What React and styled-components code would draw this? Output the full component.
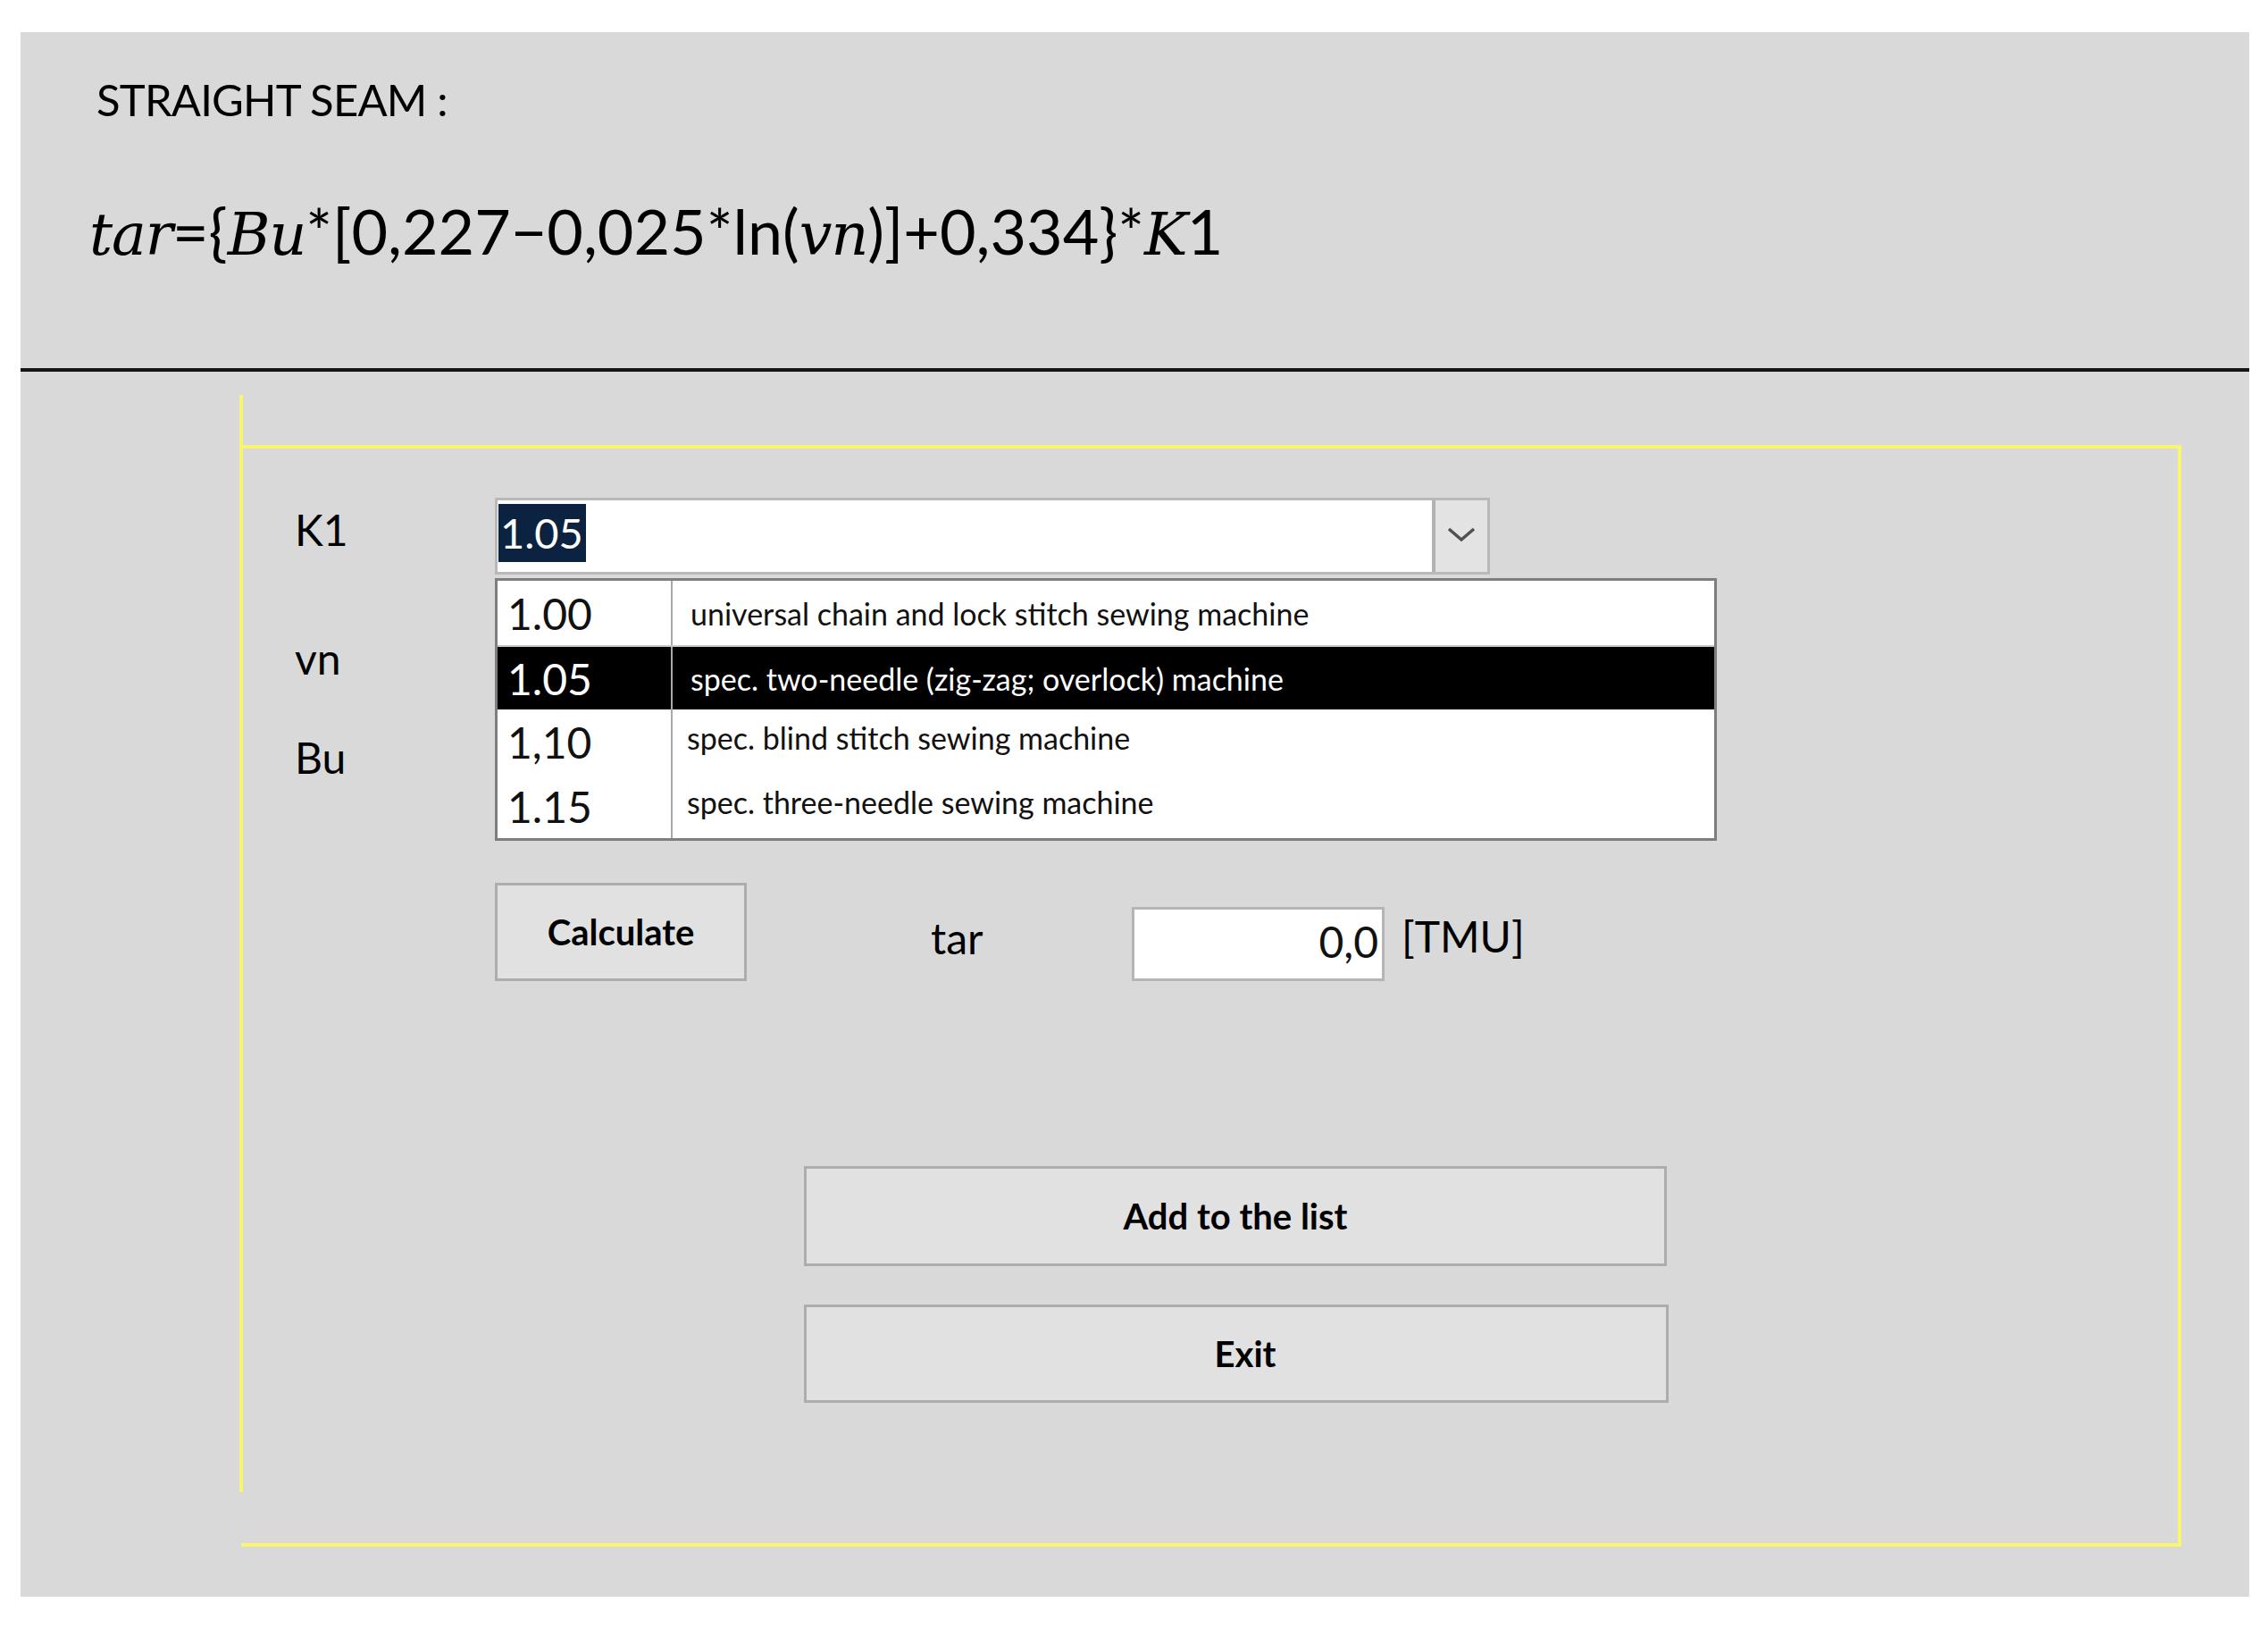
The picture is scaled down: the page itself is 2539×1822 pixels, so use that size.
import React from "react";
import styled, { createGlobalStyle } from "styled-components";

const GlobalStyle = createGlobalStyle`
  html, body {
    margin: 0;
    padding: 0;
    background: #ffffff;
  }
  body {
    font-family: Lato, "Open Sans", Arial, sans-serif;
    color: #000;
  }
  * {
    box-sizing: border-box;
  }
`;

const OPTIONS = [
  { value: "1.00", text: "universal chain and lock stitch sewing machine", indent: 20, lift: 0 },
  { value: "1.05", text: "spec. two-needle (zig-zag; overlock) machine", indent: 20, lift: 0 },
  { value: "1,10", text: "spec. blind stitch sewing machine", indent: 16, lift: 10 },
  { value: "1.15", text: "spec. three-needle sewing machine", indent: 16, lift: 10 },
];

const App = () => {
  return (
    <>
      <GlobalStyle />
      <StPanel>
        <StHeader>
          <StTitle>STRAIGHT SEAM :</StTitle>
          <StFormula>
            <StVar>tar</StVar>={"{"}
            <StVar>Bu</StVar>*[0,227−0,025*ln(<StVar>vn</StVar>)]+0,334{"}"}*
            <StVar>K</StVar>1
          </StFormula>
        </StHeader>

        <StFrame>
          <StFieldRow $top={0} $height={86}>
            <StLabel $lift={14}>K1</StLabel>
            <StCombo>
              <StComboValue>
                <StSelection>1.05</StSelection>
              </StComboValue>
              <StDropButton>
                <svg width="34" height="20" viewBox="0 0 34 20">
                  <polyline
                    points="3,4 17,16 31,4"
                    fill="none"
                    stroke="#505050"
                    strokeWidth="3.5"
                  />
                </svg>
              </StDropButton>
              <StDropList>
                {OPTIONS.map((opt) => (
                  <StOption key={opt.value} $selected={opt.value === "1.05"}>
                    <StOptionValue>{opt.value}</StOptionValue>
                    <StOptionText $indent={opt.indent} $lift={opt.lift}>
                      {opt.text}
                    </StOptionText>
                  </StOption>
                ))}
              </StDropList>
            </StCombo>
          </StFieldRow>

          <StFieldRow $top={57} $height={74}>
            <StLabel>vn</StLabel>
            <StInput />
          </StFieldRow>

          <StFieldRow $top={37} $height={74}>
            <StLabel>Bu</StLabel>
            <StInput />
          </StFieldRow>

          <StCalcRow>
            <StButton $width={282} $height={110}>Calculate</StButton>
            <StTarLabel>tar</StTarLabel>
            <StOutput>0,0</StOutput>
            <StUnit>[TMU]</StUnit>
          </StCalcRow>

          <StActions>
            <StButton $width={966} $height={112}>Add to the list</StButton>
            <StButton $width={968} $height={110} $shift={20}>Exit</StButton>
          </StActions>
        </StFrame>
      </StPanel>
    </>
  );
};

export default App;

const StPanel = styled.div`
  margin: 36px 0 0 23px;
  width: 2495px;
  height: 1751px;
  background: #d9d9d9;
  overflow: hidden;
`;

const StHeader = styled.div`
  height: 380px;
  padding: 49px 0 0 85px;
  border-bottom: 4px solid #151515;
`;

const StTitle = styled.div`
  font-family: Lato, sans-serif;
  font-size: 49px;
  line-height: 52px;
  letter-spacing: -0.8px;
`;

const StFormula = styled.div`
  margin: 86px 0 0 -8px;
  font-family: Lato, sans-serif;
  font-size: 70px;
  line-height: 1;
  white-space: nowrap;
`;

const StVar = styled.span`
  font-family: "DejaVu Serif", "Liberation Serif", serif;
  font-style: italic;
  font-size: 65px;
  letter-spacing: -1px;
`;

const StFrame = styled.div`
  position: relative;
  margin: 82px 0 0 247px;
  width: 2172px;
  height: 1233px;
  padding: 55px 0 0 60px;
  border: 4px solid #f8f66e;
  border-left: none;

  &::before {
    content: "";
    position: absolute;
    left: -2px;
    top: -60px;
    width: 4px;
    height: 1228px;
    background: #f8f66e;
  }
`;

const StFieldRow = styled.div`
  display: grid;
  grid-template-columns: 224px auto;
  align-items: center;
  height: ${(p) => p.$height}px;
  margin-top: ${(p) => p.$top}px;
`;

const StLabel = styled.div`
  font-size: 48px;
  line-height: 1;
  padding-bottom: ${(p) => p.$lift || 0}px;
`;

const StCombo = styled.div`
  position: relative;
  display: flex;
  width: 1114px;
  height: 86px;
  background: #ffffff;
  border: 3px solid #b9b9b9;
`;

const StComboValue = styled.div`
  flex: 1;
  display: flex;
  align-items: center;
  padding: 0 0 8px 1px;
`;

const StSelection = styled.span`
  display: inline-block;
  background: #0b2341;
  color: #ffffff;
  font-size: 47px;
  line-height: 65px;
  padding: 0 3px 0 2px;
`;

const StDropButton = styled.div`
  display: flex;
  align-items: center;
  justify-content: center;
  width: 62px;
  background: #e3e3e3;
  border-left: 4px solid #b2b2b2;
  padding-bottom: 4px;
`;

const StDropList = styled.div`
  position: absolute;
  top: calc(100% + 7px);
  left: -3px;
  z-index: 2;
  width: 1368px;
  background: #ffffff;
  border: 3px solid #7e7e7e;
`;

const StOption = styled.div`
  display: grid;
  grid-template-columns: 196px 1fr;
  height: 72px;
  background: ${(p) => (p.$selected ? "#000000" : "#ffffff")};
  color: ${(p) => (p.$selected ? "#ffffff" : "#111111")};
  border-top: ${(p) => (p.$selected ? "2px solid #c8c8c8" : "none")};
`;

const StOptionValue = styled.div`
  display: flex;
  align-items: center;
  padding-left: 11px;
  font-size: 48px;
  border-right: 2px solid #a8a8a8;
`;

const StOptionText = styled.div`
  display: flex;
  align-items: center;
  padding-left: ${(p) => p.$indent}px;
  padding-bottom: ${(p) => p.$lift}px;
  font-size: 34px;
`;

const StInput = styled.div`
  width: 500px;
  height: 74px;
  background: #ffffff;
  border: 3px solid #b9b9b9;
`;

const StCalcRow = styled.div`
  display: flex;
  align-items: center;
  height: 110px;
  margin-top: 103px;
  padding-left: 224px;
`;

const StButton = styled.div`
  display: flex;
  align-items: center;
  justify-content: center;
  width: ${(p) => p.$width}px;
  height: ${(p) => p.$height}px;
  padding: 0 0 0 ${(p) => p.$shift || 0}px;
  background: #e1e1e1;
  border: 3px solid #adadad;
  font-weight: 700;
  font-size: 40px;
  color: #000;
`;

const StTarLabel = styled.div`
  width: 431px;
  padding: 12px 0 0 206px;
  font-size: 48px;
`;

const StOutput = styled.div`
  align-self: flex-end;
  width: 283px;
  height: 83px;
  padding: 3px 4px 0 0;
  background: #ffffff;
  border: 3px solid #b5b5b5;
  text-align: right;
  font-size: 48px;
  line-height: 66px;
  color: #111;
`;

const StUnit = styled.div`
  margin: 8px 0 0 19px;
  font-size: 48px;
`;

const StActions = styled.div`
  display: flex;
  flex-direction: column;
  gap: 43px;
  margin: 207px 0 0 570px;
`;
